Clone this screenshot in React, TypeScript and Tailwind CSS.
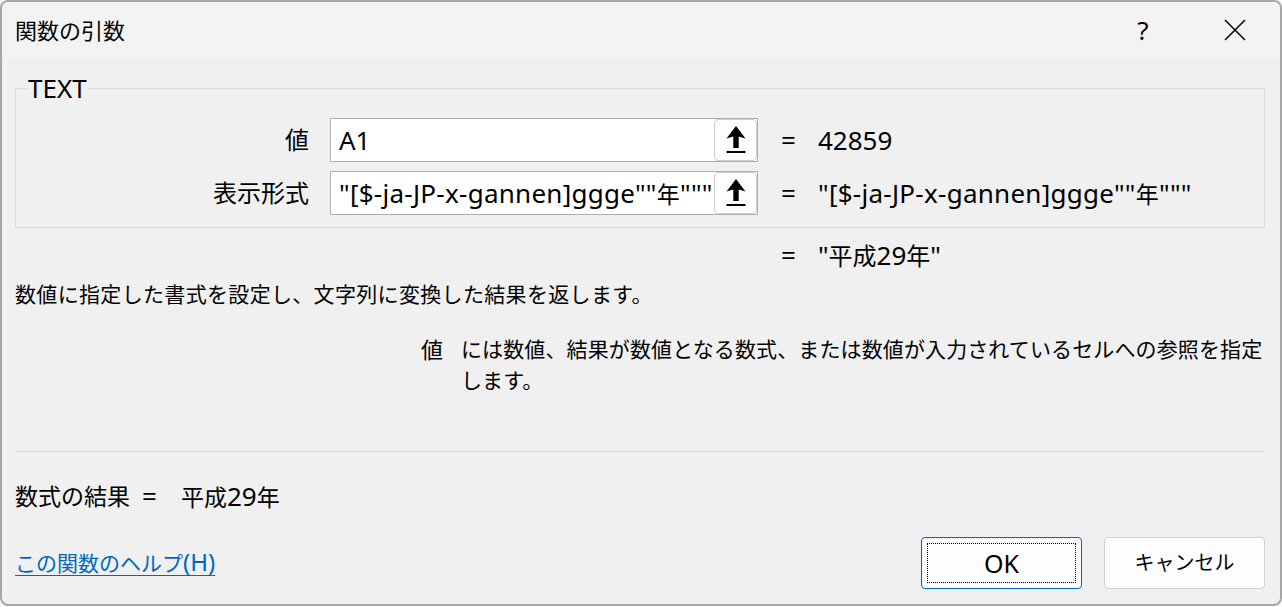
import React from "react";

const J = ({ s, children }: { s: string; children: React.ReactNode }) => (
  <span className={s}>{children}</span>
);

function ArrowBtn() {
  return (
    <div className="w-[43px] h-[42px] border border-[#cfcfcf] rounded-[4px] bg-[#fdfdfd] flex items-center justify-center shrink-0">
      <svg width="20" height="28" viewBox="0 0 20 28">
        <polygon points="10,0 19.5,12.5 12.7,10.5 12.7,22 7.3,22 7.3,10.5 0.5,12.5" fill="#000" />
        <rect x="0.5" y="25" width="19" height="2" fill="#000" />
      </svg>
    </div>
  );
}

function Row({ label, value, result }: { label: React.ReactNode; value: React.ReactNode; result: React.ReactNode }) {
  return (
    <div className="flex items-center h-[44px]">
      <div className="w-[293px] text-right text-[24px] leading-[32px] shrink-0">{label}</div>
      <div className="ml-[21px] w-[428px] h-[44px] border border-[#adadad] bg-white flex items-center shrink-0">
        <div className="flex-1 overflow-hidden whitespace-nowrap pl-[8px] text-[26px] leading-[32px]">{value}</div>
        <ArrowBtn />
      </div>
      <div className="ml-[23px] w-[37px] text-[26px] leading-[32px] shrink-0">=</div>
      <div className="text-[26px] leading-[32px] whitespace-nowrap">{result}</div>
    </div>
  );
}

export default function App() {
  const fmt = (
    <span className="tracking-[0.27px]">
      "[$-ja-JP-x-gannen]ggge""<J s="text-[23px]">年</J>"""
    </span>
  );
  return (
    <div className="w-[1282px] h-[607px] bg-[#fafafa] overflow-hidden font-['Noto_Sans','Noto_Sans_CJK_JP',sans-serif] text-black">
      <div className="w-[1282px] h-[606px] border-2 border-[#a6a6a6] rounded-[8px] bg-[#f0f0f0] flex flex-col overflow-hidden">
        {/* title bar */}
        <div className="h-[56px] bg-[#f3f3f3] flex items-center pl-[13px] pr-[34px] shrink-0">
          <div className="text-[22px] leading-none">関数の引数</div>
          <div className="ml-auto flex items-center">
            <div className="w-[24px] text-center text-[26px] leading-none">?</div>
            <svg className="ml-[69px]" width="22" height="22" viewBox="0 0 22 22">
              <path d="M1 1 L21 21 M21 1 L1 21" stroke="#000" strokeWidth="1.5" fill="none" />
            </svg>
          </div>
        </div>

        {/* body */}
        <div className="flex-1 flex flex-col pl-[13px] pr-[15px]">
          <fieldset className="mt-[18px] border border-[#dcdcdc] pt-[18px] pb-[12px] flex flex-col gap-[9px]">
            <legend className="ml-[12px] px-0 text-[26px] leading-[24px]">TEXT</legend>
            <Row label="値" value="A1" result="42859" />
            <Row label="表示形式" value={fmt} result={fmt} />
          </fieldset>

          <div className="mt-[11px] flex items-center h-[32px]">
            <div className="ml-[766px] w-[37px] text-[26px] leading-[32px]">=</div>
            <div className="text-[26px] leading-[32px] whitespace-nowrap">
              "<J s="text-[24px]">平成</J>29<J s="text-[24px]">年</J>"
            </div>
          </div>

          <div className="mt-[7px] text-[21px] leading-[32px] whitespace-nowrap tracking-[0.33px]">
            数値に指定した書式を設定し、文字列に変換した結果を返します。
          </div>

          <div className="mt-[24px] flex">
            <div className="ml-[406px] w-[40px] text-[22px] leading-[31px] shrink-0">値</div>
            <div className="text-[21px] leading-[31px] whitespace-nowrap tracking-[0.12px]">
              には数値、結果が数値となる数式、または数値が入力されているセルへの参照を指定
              <br />
              します。
            </div>
          </div>

          <div className="mt-[55px] h-px bg-[#dadada]" />

          <div className="mt-[28px] flex items-center h-[32px]">
            <span className="text-[23px] leading-[32px]">数式の結果</span>
            <span className="ml-[12px] text-[26px] leading-[32px]">=</span>
            <span className="ml-[24px] text-[26px] leading-[32px] whitespace-nowrap">
              <J s="text-[23px]">平成</J>29<J s="text-[23px]">年</J>
            </span>
          </div>

          <div className="mt-[25px] flex items-center h-[52px]">
            <a className="text-[#0067c0] underline underline-offset-[4px] decoration-1 whitespace-nowrap leading-[32px]">
              <span className="text-[21px]">この関数のヘルプ</span>
              <span className="text-[24px]">(H)</span>
            </a>
            <div className="ml-auto w-[161px] h-[52px] border border-[#0067c0] rounded-[4px] bg-[#fdfdfd] flex">
              <div className="flex-1 m-[5px] border border-dotted border-black flex items-center justify-center text-[25px] leading-none">
                OK
              </div>
            </div>
            <div className="ml-[22px] w-[161px] h-[52px] border border-[#d0d0d0] rounded-[4px] bg-[#fdfdfd] flex items-center justify-center text-[20px] leading-none">
              キャンセル
            </div>
          </div>
        </div>
      </div>
    </div>
  );
}
